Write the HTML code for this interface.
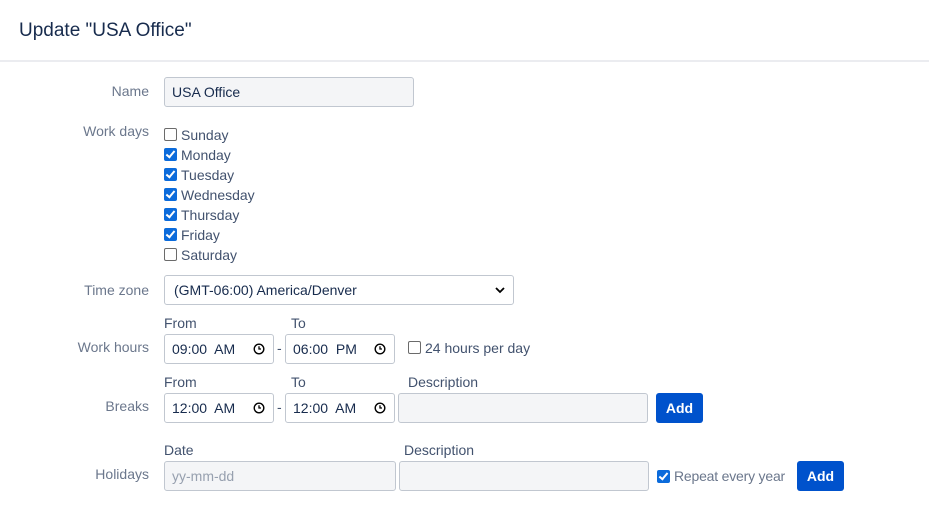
<!DOCTYPE html>
<html><head><style>
body{margin:0;width:929px;height:519px;background:#fff;font-family:"Liberation Sans",sans-serif;position:relative;overflow:hidden}
.a{position:absolute}
h1{position:absolute;left:19px;top:20px;margin:0;font-size:19px;font-weight:normal;color:#172b4d}
.hr{left:0;top:60px;width:929px;height:2px;background:#ebecf0}
.lab{position:absolute;right:780px;font-size:14px;color:#6b778c;white-space:nowrap}
.in{position:absolute;box-sizing:border-box;border:1px solid #c1c7d0;border-radius:3px;background:#f4f5f7;height:30px;font-size:14px;color:#172b4d;line-height:28px;padding-left:7px}
.w{background:#fff}
.tm{word-spacing:4px}
.cb{position:absolute;width:13px;height:13px;box-sizing:border-box;border-radius:2px}
.off{border:1px solid #6b6b6b;background:#fff}
.on{background:#0b6bdb}
.on::after{content:"";position:absolute;left:4px;top:1px;width:3px;height:7px;border:solid #fff;border-width:0 2px 2px 0;transform:rotate(40deg)}
.t{position:absolute;font-size:14px;color:#42526e;white-space:nowrap}
.sm{position:absolute;font-size:14px;color:#42526e}
.btn{position:absolute;background:#0052cc;color:#fff;font-weight:bold;font-size:14px;border-radius:3px;text-align:center;line-height:30px;height:30px}
.clk{position:absolute;right:8px;top:8px;width:12px;height:12px}
</style></head><body>
<h1>Update "USA Office"</h1>
<div class="a hr"></div>

<div class="lab" style="top:83px">Name</div>
<div class="in" style="left:164px;top:77px;width:250px">USA Office</div>

<div class="lab" style="top:123px">Work days</div>
<div class="cb off" style="left:164px;top:128px"></div><div class="t" style="left:181px;top:127px">Sunday</div>
<div class="cb on" style="left:164px;top:148px"></div><div class="t" style="left:181px;top:147px">Monday</div>
<div class="cb on" style="left:164px;top:168px"></div><div class="t" style="left:181px;top:167px">Tuesday</div>
<div class="cb on" style="left:164px;top:188px"></div><div class="t" style="left:181px;top:187px">Wednesday</div>
<div class="cb on" style="left:164px;top:208px"></div><div class="t" style="left:181px;top:207px">Thursday</div>
<div class="cb on" style="left:164px;top:228px"></div><div class="t" style="left:181px;top:227px">Friday</div>
<div class="cb off" style="left:164px;top:248px"></div><div class="t" style="left:181px;top:247px">Saturday</div>

<div class="lab" style="top:282px">Time zone</div>
<div class="in w" style="left:164px;top:275px;width:350px;padding-left:9px">(GMT-06:00) America/Denver
<svg class="a" style="right:8px;top:10px" width="10" height="8" viewBox="0 0 10 8"><path d="M1 2l4 4 4-4" fill="none" stroke="#000" stroke-width="1.8"/></svg></div>

<div class="sm" style="left:164px;top:315px">From</div><div class="sm" style="left:291px;top:315px">To</div>
<div class="lab" style="top:339px">Work hours</div>
<div class="in w tm" style="left:164px;top:334px;width:110px">09:00 AM<svg class="clk" viewBox="0 0 12 12"><circle cx="6" cy="6" r="4.8" fill="none" stroke="#000" stroke-width="1.4"/><path d="M6 3.3V6h2" fill="none" stroke="#000" stroke-width="1.3"/></svg></div>
<div class="sm" style="left:277px;top:340px">-</div>
<div class="in w tm" style="left:285px;top:334px;width:110px">06:00 PM<svg class="clk" viewBox="0 0 12 12"><circle cx="6" cy="6" r="4.8" fill="none" stroke="#000" stroke-width="1.4"/><path d="M6 3.3V6h2" fill="none" stroke="#000" stroke-width="1.3"/></svg></div>
<div class="cb off" style="left:408px;top:341px"></div><div class="t" style="left:425px;top:340px">24 hours per day</div>

<div class="sm" style="left:164px;top:374px">From</div><div class="sm" style="left:291px;top:374px">To</div><div class="sm" style="left:408px;top:374px">Description</div>
<div class="lab" style="top:398px">Breaks</div>
<div class="in w tm" style="left:164px;top:393px;width:110px">12:00 AM<svg class="clk" viewBox="0 0 12 12"><circle cx="6" cy="6" r="4.8" fill="none" stroke="#000" stroke-width="1.4"/><path d="M6 3.3V6h2" fill="none" stroke="#000" stroke-width="1.3"/></svg></div>
<div class="sm" style="left:277px;top:399px">-</div>
<div class="in w tm" style="left:285px;top:393px;width:110px">12:00 AM<svg class="clk" viewBox="0 0 12 12"><circle cx="6" cy="6" r="4.8" fill="none" stroke="#000" stroke-width="1.4"/><path d="M6 3.3V6h2" fill="none" stroke="#000" stroke-width="1.3"/></svg></div>
<div class="in" style="left:398px;top:393px;width:250px"></div>
<div class="btn" style="left:656px;top:393px;width:47px">Add</div>

<div class="sm" style="left:164px;top:442px">Date</div><div class="sm" style="left:404px;top:442px">Description</div>
<div class="lab" style="top:466px">Holidays</div>
<div class="in" style="left:164px;top:461px;width:232px;color:#97a0af">yy-mm-dd</div>
<div class="in" style="left:399px;top:461px;width:250px"></div>
<div class="cb on" style="left:657px;top:470px"></div><div class="t" style="left:674px;top:468px;color:#6b778c;letter-spacing:-0.2px">Repeat every year</div>
<div class="btn" style="left:797px;top:461px;width:47px">Add</div>
</body></html>
